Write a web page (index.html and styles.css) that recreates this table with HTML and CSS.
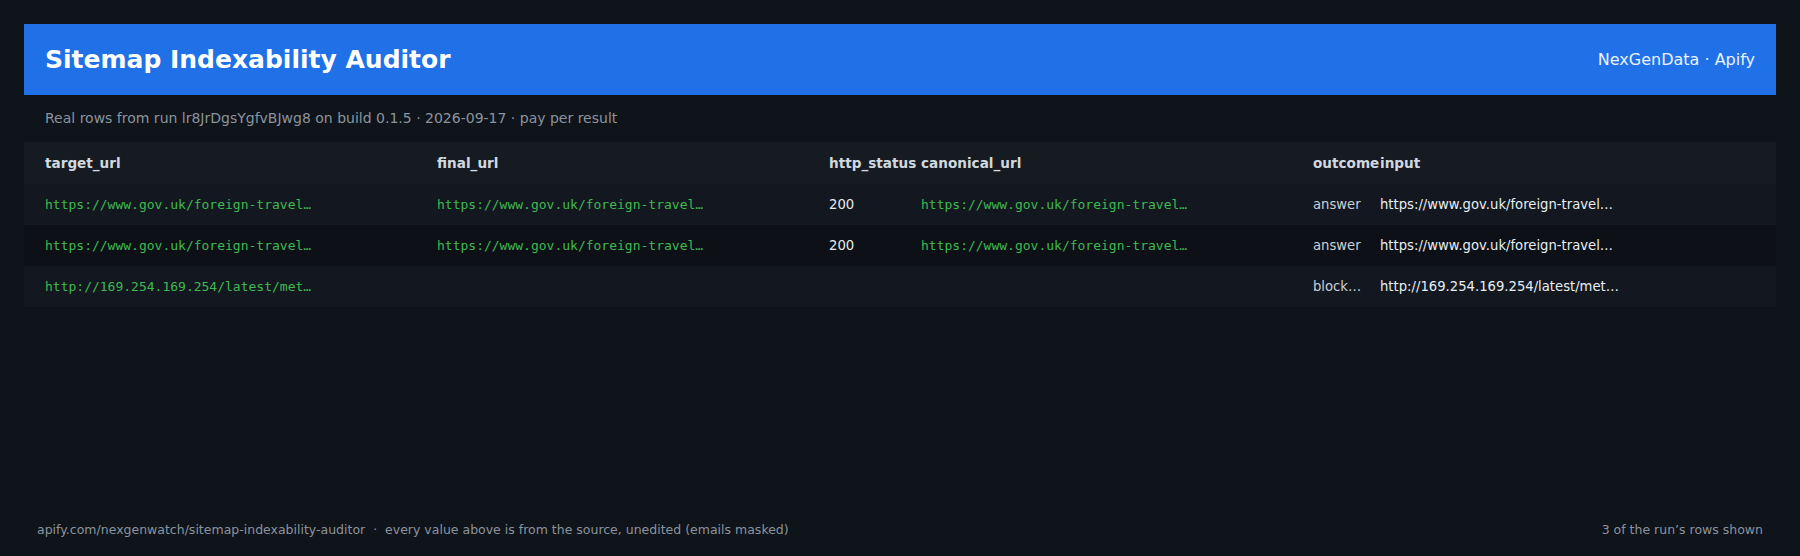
FILE: index.html
```html
<!DOCTYPE html>
<html lang="en">
<head>
<meta charset="utf-8">
<title>Sitemap Indexability Auditor</title>
<link rel="stylesheet" href="styles.css">
</head>
<body>
<main class="page">
  <header class="banner">
    <h1 class="title">Sitemap Indexability Auditor</h1>
    <div class="brand">NexGenData · Apify</div>
  </header>
  <p class="meta">Real rows from run lr8JrDgsYgfvBJwg8 on build 0.1.5 · 2026-09-17 · pay per result</p>
  <div class="table">
    <div class="row head">
      <div class="cell">target_url</div>
      <div class="cell">final_url</div>
      <div class="cell">http_status</div>
      <div class="cell">canonical_url</div>
      <div class="cell">outcome</div>
      <div class="cell">input</div>
    </div>
    <div class="row odd">
      <div class="cell mono">https://www.gov.uk/foreign-travel…</div>
      <div class="cell mono">https://www.gov.uk/foreign-travel…</div>
      <div class="cell num">200</div>
      <div class="cell mono">https://www.gov.uk/foreign-travel…</div>
      <div class="cell tag">answer</div>
      <div class="cell plain">https://www.gov.uk/foreign-travel…</div>
    </div>
    <div class="row even">
      <div class="cell mono">https://www.gov.uk/foreign-travel…</div>
      <div class="cell mono">https://www.gov.uk/foreign-travel…</div>
      <div class="cell num">200</div>
      <div class="cell mono">https://www.gov.uk/foreign-travel…</div>
      <div class="cell tag">answer</div>
      <div class="cell plain">https://www.gov.uk/foreign-travel…</div>
    </div>
    <div class="row odd">
      <div class="cell mono">http://169.254.169.254/latest/met…</div>
      <div class="cell mono"></div>
      <div class="cell num"></div>
      <div class="cell mono"></div>
      <div class="cell tag">block…</div>
      <div class="cell plain">http://169.254.169.254/latest/met…</div>
    </div>
  </div>
  <footer class="foot">
    <span>apify.com/nexgenwatch/sitemap-indexability-auditor &nbsp;·&nbsp; every value above is from the source, unedited (emails masked)</span>
    <span>3 of the run’s rows shown</span>
  </footer>
</main>
</body>
</html>
```

FILE: styles.css
```css
* { box-sizing: border-box; }
html, body {
  margin: 0;
  padding: 0;
  background: #0f131a;
}
body {
  font-family: "DejaVu Sans", "Liberation Sans", sans-serif;
  color: #e6edf3;
}
.page {
  height: 556px;
  padding: 24px 24px 17px;
  display: flex;
  flex-direction: column;
}
.banner {
  height: 71px;
  background: #2070e8;
  padding: 0 21px;
  display: flex;
  align-items: center;
  justify-content: space-between;
}
.title {
  margin: 0;
  font-size: 25px;
  font-weight: bold;
  color: #ffffff;
}
.brand {
  font-size: 16px;
  color: #eaf2ff;
}
.meta {
  margin: 0;
  padding: 13px 21px 14px;
  line-height: 20px;
  font-size: 14px;
  color: #8b949e;
}
.table {
  display: flex;
  flex-direction: column;
}
.row {
  display: grid;
  grid-template-columns: 1fr 1fr 92px 1fr 67px 1fr;
  padding: 0 4px 0 21px;
  height: 41px;
  align-items: center;
}
.row.head { height: 42px; background: #161b22; }
.row.odd { background: #131820; }
.row.even { background: #0d1117; }
.cell {
  white-space: nowrap;
  font-size: 13.2px;
}
.head .cell {
  font-size: 13.6px;
  font-weight: bold;
  color: #d2d8df;
}
.mono {
  font-family: "DejaVu Sans Mono", "Liberation Mono", monospace;
  font-size: 13px;
  color: #3fb950;
}
.num { color: #e6edf3; }
.tag { color: #c9d1d9; }
.plain { color: #e6edf3; }
.foot {
  margin-top: auto;
  padding: 0 13px 2px;
  display: flex;
  justify-content: space-between;
  font-size: 12.5px;
  color: #8b949e;
}
```
